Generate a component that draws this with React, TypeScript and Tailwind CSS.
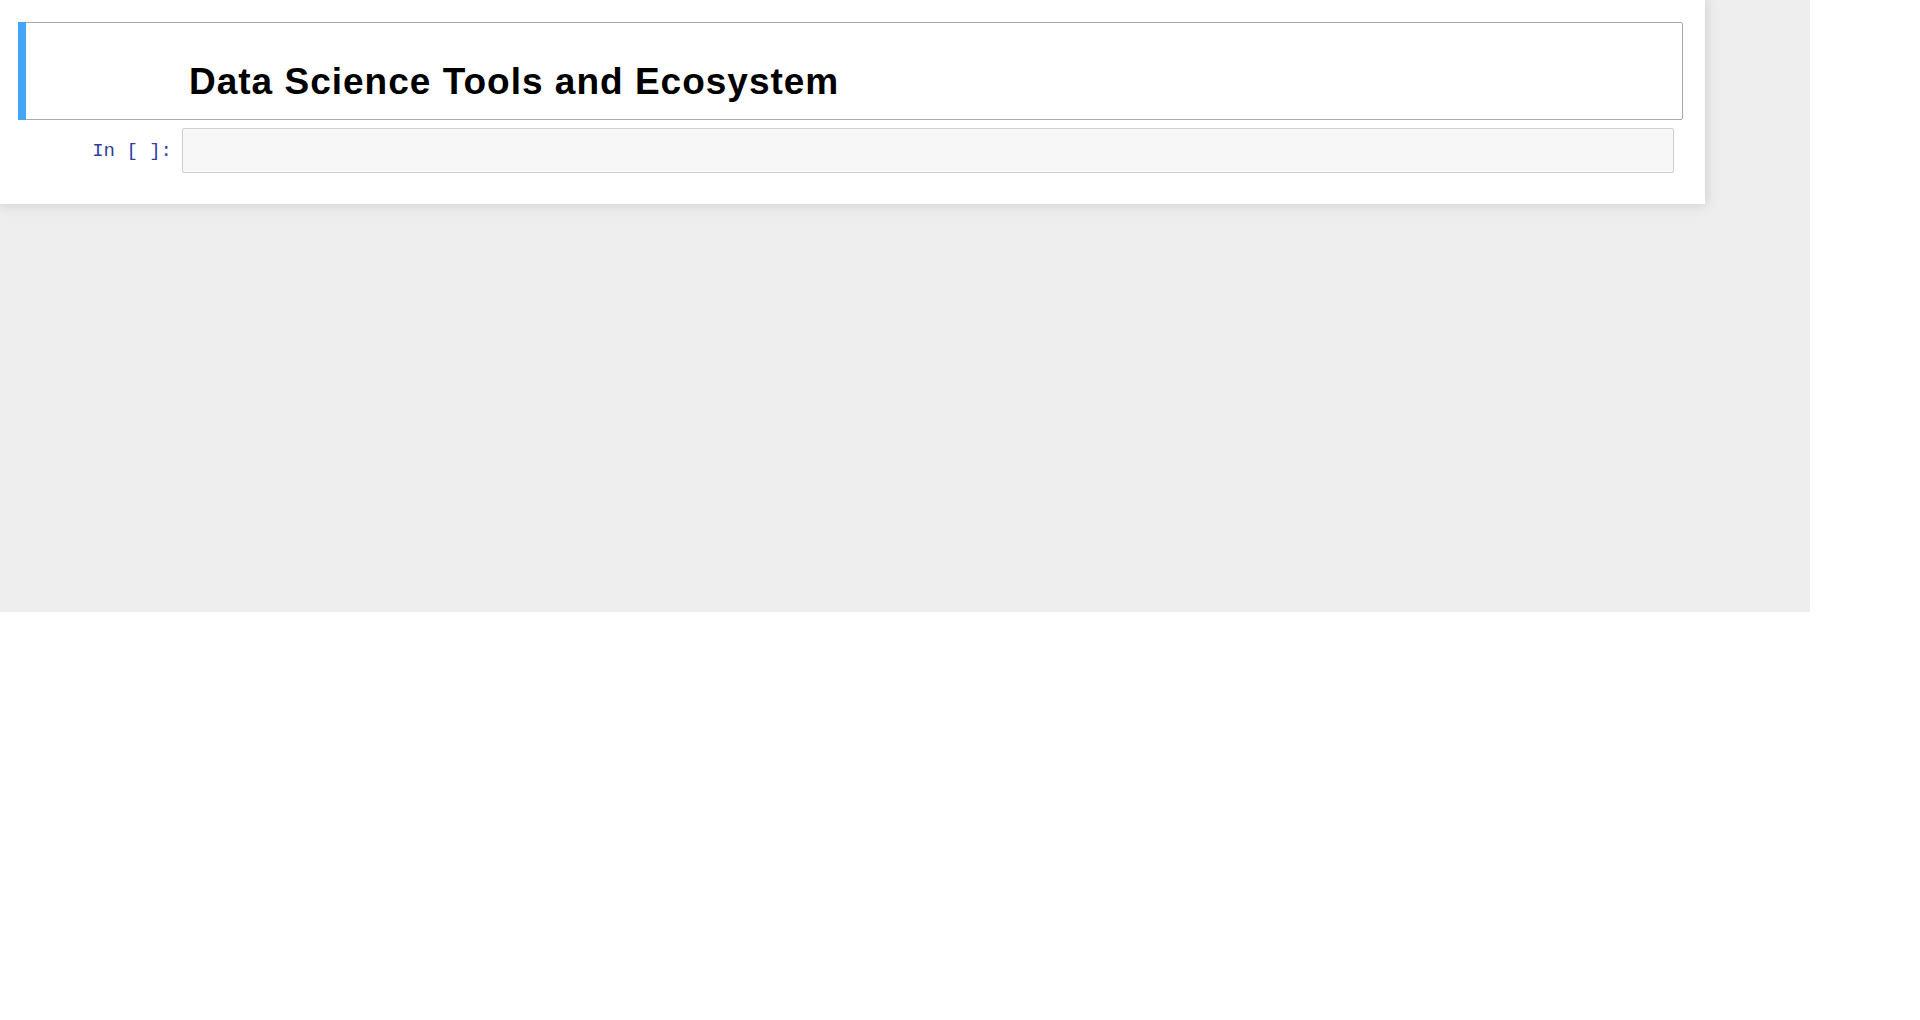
export default function App() {
  return (
    <div className="w-[1810px] h-[612px] bg-[#eeeeee]">
      <div className="w-[1705px] bg-white pt-[22px] pb-[31px] pl-[18px] shadow-[0px_0px_12px_1px_rgba(87,87,87,0.2)]">
        {/* selected markdown cell */}
        <div className="relative w-[1665px] border border-[#ababab] rounded-[2px]">
          <div className="absolute -top-px -left-px w-[8px] h-[calc(100%+2px)] bg-[#42a5f5]" />
          <h1 className="pl-[170px] pt-[37px] pb-[15px] text-[37px] leading-[44px] font-bold tracking-[1px] text-black font-['Liberation_Sans',Arial,sans-serif]">
            Data Science Tools and Ecosystem
          </h1>
        </div>

        {/* empty code cell */}
        <div className="flex items-start mt-[8px]">
          <div className="w-[164px] shrink-0 pt-[12px] pr-[10px] text-right text-[19px] leading-[23px] text-[#303f9f] font-['Liberation_Mono','Courier_New',monospace] whitespace-pre">
            In [ ]:
          </div>
          <div className="w-[1492px] h-[45px] bg-[#f7f7f7] border border-[#cfcfcf] rounded-[2px]" />
        </div>
      </div>
    </div>
  );
}
